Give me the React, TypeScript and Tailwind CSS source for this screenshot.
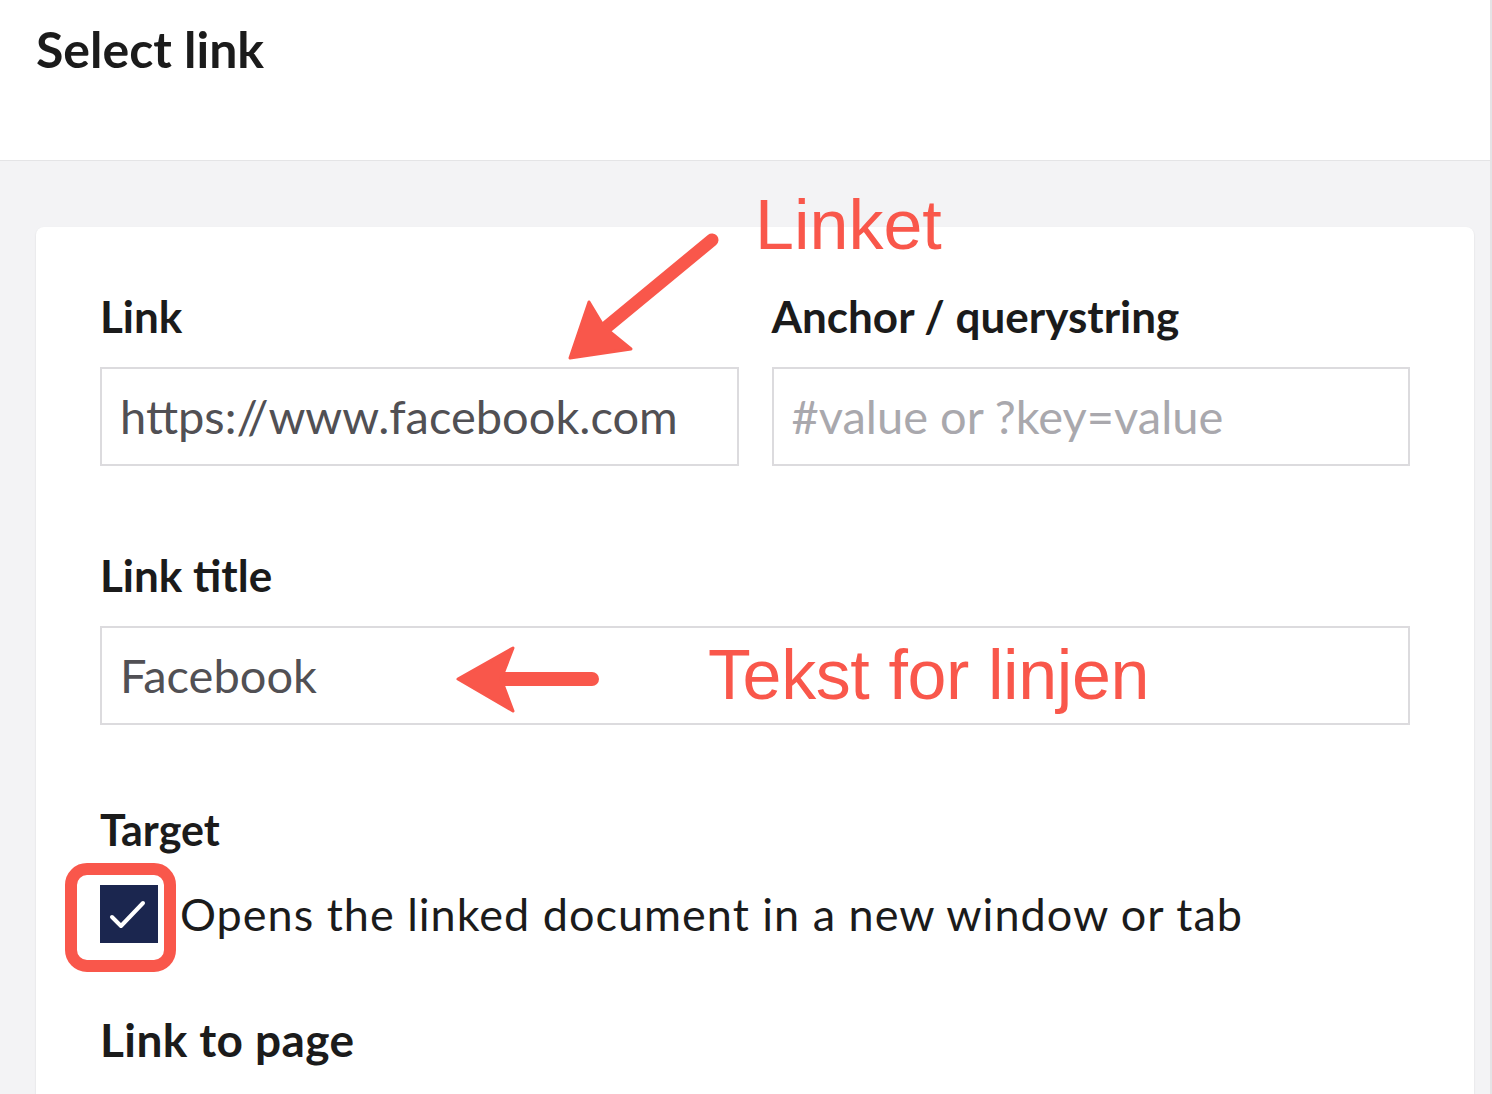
const Field = ({ label, children, className = "" }: { label: string; children: React.ReactNode; className?: string }) => (
  <div className={className}>
    <label className="block text-[44px] leading-[1.2] font-bold text-[#1b1b1b] mb-[24px]">{label}</label>
    {children}
  </div>
);

const inputCls =
  "w-full h-[99px] border-2 border-[#dcdbde] bg-white pl-[18px] text-[47px] leading-[1.2] text-[#515054] outline-none placeholder:text-[#a9a8ad]";

const App = () => {
  return (
    <div className="relative w-[1492px] h-[1094px] overflow-hidden bg-[#f3f3f5] border-r-2 border-[#e4e4e6] font-['Lato','Noto_Sans',sans-serif]">
      <header className="h-[161px] bg-white border-b border-[#e4e4e6] pl-9 pt-[19px]">
        <h1 className="text-[50px] leading-[1.2] font-bold text-[#1b1b1b]">Select link</h1>
      </header>

      <div className="pl-9 pr-4 pt-[66px]">
        <div className="bg-white rounded-lg shadow-[0_1px_2px_rgba(0,0,0,0.12)] px-16 pt-[63px] pb-16">
          <div className="grid grid-cols-2 gap-[33px] mb-[83px]">
            <Field label="Link">
              <input className={inputCls} defaultValue="https://www.facebook.com" />
            </Field>
            <Field label="Anchor / querystring">
              <input className={inputCls} placeholder="#value or ?key=value" />
            </Field>
          </div>

          <Field label="Link title" className="mb-[79px]">
            <input className={inputCls} defaultValue="Facebook" />
          </Field>

          <div className="mb-[69px]">
            <label className="block text-[43px] leading-[1.2] font-bold text-[#1b1b1b] mb-[30px]">Target</label>
            <div className="flex items-center gap-[22px]">
              <span className="w-[58px] h-[58px] bg-[#1b264f] flex items-center justify-center shrink-0">
                <svg width="58" height="58" viewBox="0 0 58 58">
                  <path d="M12 32 L21 41 L43 18" fill="none" stroke="#fff" strokeWidth="4" strokeLinecap="round" strokeLinejoin="round" />
                </svg>
              </span>
              <span className="text-[45px] leading-[1.2] tracking-[1px] text-[#1b1b1b]">
                Opens the linked document in a new window or tab
              </span>
            </div>
          </div>

          <label className="block text-[46px] leading-[1.2] tracking-[0.4px] font-bold text-[#1b1b1b]">Link to page</label>
        </div>
      </div>

      {/* annotations */}
      <svg className="absolute inset-0 pointer-events-none" width="1492" height="1094">
        <g fill="#f9574b" stroke="#f9574b" strokeLinecap="round" strokeLinejoin="round">
          <line x1="712" y1="240" x2="603" y2="330" strokeWidth="13" />
          <polygon points="570,358 589,302 604,327 631,349" strokeWidth="3" />
          <line x1="592" y1="679" x2="500" y2="679" strokeWidth="14" />
          <polygon points="458,679 513,648 501,679 513,711" strokeWidth="3" />
        </g>
      </svg>
      <div className="absolute left-[755px] top-[190px] text-[70px] leading-none text-[#f9574b] font-['Liberation_Sans',Arial,sans-serif]">
        Linket
      </div>
      <div className="absolute left-[708px] top-[640px] text-[70px] leading-none tracking-[-0.4px] text-[#f9574b] font-['Liberation_Sans',Arial,sans-serif]">
        Tekst for linjen
      </div>
      <div className="absolute left-[65px] top-[863px] w-[111px] h-[109px] border-[12px] border-[#f9574b] rounded-[22px]" />
    </div>
  );
};

export default App;
